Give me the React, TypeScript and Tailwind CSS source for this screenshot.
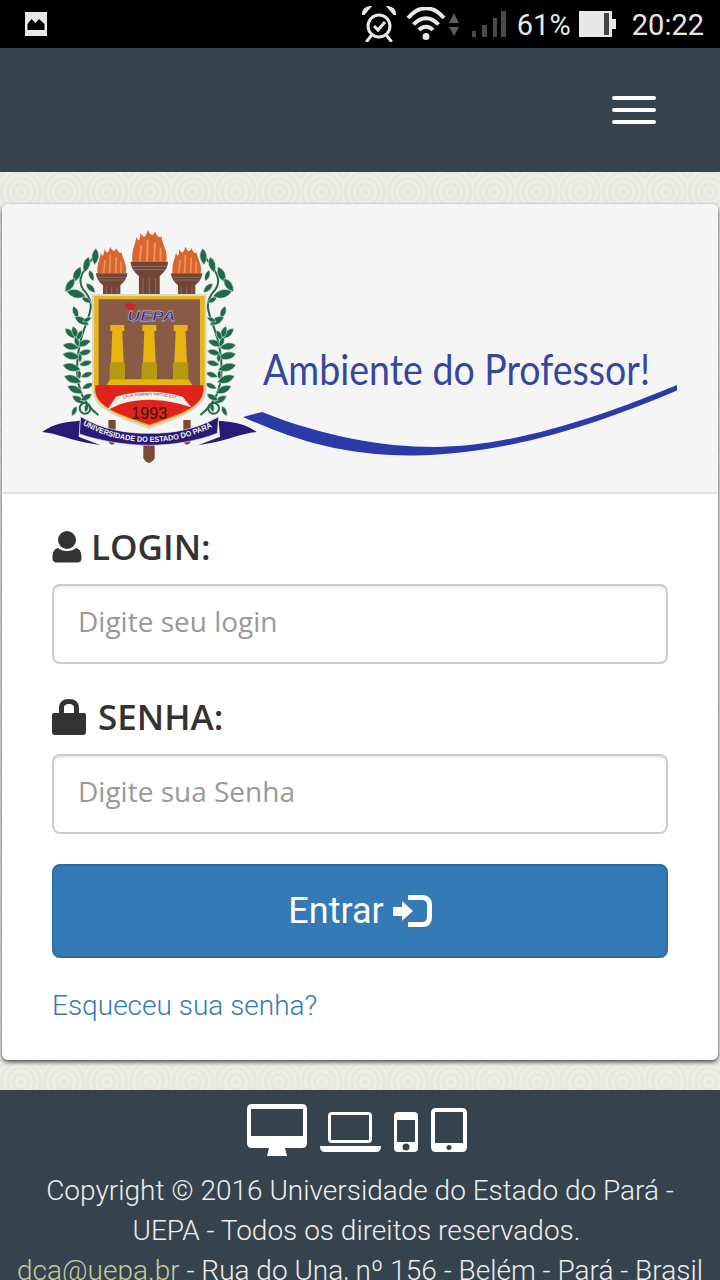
const pattern =
  "bg-[repeating-radial-gradient(circle_at_21px_20px,#e8e8e1_0,#e8e8e1_3px,#eeeee8_3px,#eeeee8_6px),radial-gradient(circle_at_0_0,#eeeee8_0,#e9e9e2_100%)] bg-[length:43px_44.5px]";

// [x, y, angle, length] in emblem coordinates, left half; the right half is mirrored
const leaves: number[][] = [
  [198, 85, 95, 50], [176, 110, 105, 50], [152, 140, 115, 52], [134, 175, 125, 50], [110, 214, 15, 60],
  [178, 150, 70, 36], [168, 190, 45, 40], [155, 232, 30, 34], [130, 258, 70, 40], [134, 290, 30, 50],
  [158, 305, -25, 30], [105, 325, 45, 44], [128, 318, 70, 42], [156, 330, 115, 36], [182, 362, 160, 46],
  [98, 375, 10, 50], [98, 402, 12, 54], [98, 435, 15, 56], [102, 468, 20, 56], [112, 498, 25, 52],
  [126, 528, 30, 44], [184, 392, 165, 42], [186, 425, 165, 40], [188, 458, 160, 38], [190, 490, 155, 38],
  [186, 522, 150, 40], [135, 350, 70, 34], [140, 558, 115, 34], [172, 548, 100, 30], [150, 400, 90, 28],
  [148, 450, 90, 28],
];

function Emblem() {
  return (
    <g transform="translate(28 16) scale(0.3333)">
      {/* torches */}
      <path d="M340 660h34v55q-17 28-34 0zM235 600h22v65q-11 18-22 0zM460 600h22v65q-11 18-22 0z" fill="#7a4a35" />
      {[245, 358, 470].map((cx, i) => {
        const s = i === 1 ? 1.2 : 1;
        return (
          <g key={cx} transform={`translate(${cx} ${i === 1 ? 125 : 160}) scale(${s})`}>
            <path
              d="M-42 0C-46-25-36-40-32-62-28-50-24-48-22-72-16-60-10-56-4-80 2-66 10-62 14-76 20-60 28-58 30-64 32-42 48-28 42 0Z"
              fill="#d9662f"
            />
            <path d="M-24 0L-20-40M-6 0L-4-55M12 0L14-48M28 0L28-35" stroke="#ee935c" strokeWidth="5" />
            <path d="M-47 0H47C46 20 30 32 26 36V85H-26V36C-30 32-46 20-47 0Z" fill="#6f4638" />
            <path d="M-43 12H43M-39 20H39M-16 40V85M0 40V85M16 40V85" stroke="#9c7868" strokeWidth="2" />
          </g>
        );
      })}
      {/* laurel */}
      {[0, 1].map((side) => (
        <g key={side} transform={side ? "translate(716 0) scale(-1 1)" : undefined}>
          <path d="M205 585C130 530 135 440 150 370S205 260 165 215 185 130 200 95" fill="none" stroke="#1f6a48" strokeWidth="6" />
          {leaves.map(([x, y, a, l], i) => (
            <path
              key={i}
              transform={`translate(${x} ${y}) rotate(${a})`}
              d={`M0 0Q${l * 0.45} ${-l * 0.42} ${l} 0Q${l * 0.45} ${l * 0.42} 0 0Z`}
              fill="#1f6a48"
              stroke="#e9efe9"
              strokeWidth="1.500"
            />
          ))}
          <circle cx="165" cy="565" r="16" fill="none" stroke="#1f6a48" strokeWidth="6" />
        </g>
      ))}
      {/* shield */}
      <path d="M186 222H530V505C530 575 430 600 358 628 286 600 186 575 186 505Z" fill="#d8d8d0" />
      <path d="M192 228H524V505C524 570 425 595 358 620 291 595 192 570 192 505Z" fill="#e6b820" />
      <path d="M206 238H510V500H206Z" fill="#8a5a46" />
      <path d="M196 496H520V510C520 565 425 590 358 614 291 590 196 565 196 510Z" fill="#e0231c" />
      {/* columns */}
      {[262, 358, 452].map((x) => (
        <g key={x}>
          <path d={`M${x - 21} 315H${x + 21}V333H${x - 21}Z`} fill="#e6b40f" />
          <path d={`M${x - 15} 333H${x + 15}L${x + 19} 428H${x - 19}Z`} fill="#e6b40f" />
          <path d={`M${x - 23} 428H${x + 23}V478H${x - 23}Z`} fill="#b59a10" />
        </g>
      ))}
      <path d="M240 478H476L487 495H230Z" fill="#e6b40f" />
      <path d="M284 252Q300 244 318 256L306 272Q290 272 284 252Z" fill="#d6202a" />
      <text x="292" y="302" fontFamily="Liberation Sans, sans-serif" fontWeight="700" fontStyle="italic" fontSize="46" fill="#2a2a88" stroke="#fff" strokeWidth="1" textLength="144" lengthAdjust="spacingAndGlyphs">
        UEPA
      </text>
      {/* motto ribbon */}
      <path d="M232 570L258 530Q358 500 458 530L484 562 442 550Q358 528 272 552Z" fill="#f4f0e8" />
      <path id="motto" d="M266 540Q358 512 450 540" fill="none" />
      <text fontFamily="Liberation Sans, sans-serif" fontSize="12" fill="#4a3a30">
        <textPath href="#motto" startOffset="8%">LAUS HOMINIS VIRTUS EST</textPath>
      </text>
      <text x="358" y="597" textAnchor="middle" fontFamily="Liberation Sans, sans-serif" fontSize="52" fill="#3a1412" textLength="108" lengthAdjust="spacingAndGlyphs">
        1993
      </text>
      {/* banner */}
      <path d="M36 636C70 610 110 605 150 602L146 650 212 676 170 668C120 660 80 640 36 636Z" fill="#2a1a78" />
      <path d="M680 636C646 610 606 605 566 602L570 650 504 676 546 668C596 660 636 640 680 636Z" fill="#2a1a78" />
      <path d="M152 590C220 630 290 640 358 640S496 630 566 590L562 640C500 665 420 676 358 676S214 665 148 642Z" fill="#2a1a78" stroke="#e8e8f0" strokeWidth="2" />
      <path id="bannerArc" d="M158 614C225 652 295 666 358 666S492 652 560 614" fill="none" />
      <text fontFamily="Liberation Sans Narrow, Liberation Sans, sans-serif" fontWeight="700" fontSize="23" fill="#f4f4f4">
        <textPath href="#bannerArc" textLength="405" lengthAdjust="spacingAndGlyphs">UNIVERSIDADE DO ESTADO DO PARÁ</textPath>
      </text>
    </g>
  );
}

function Banner() {
  return (
    <svg viewBox="0 0 716 288" className="block w-[716px] h-[288px]">
      <Emblem />
      <text x="261" y="181" fontFamily="Lato, sans-serif" fontSize="42" fill="#34479f" textLength="387" lengthAdjust="spacingAndGlyphs">
        Ambiente do Professor!
      </text>
      <path d="M241 213L260 208C320 232 380 243 432 243 510 243 600 212 675 181V186.500C600 218 510 250 411 251.500 340 252 290 235 241 213Z" fill="#2a3aa8" />
    </svg>
  );
}

function StatusBar() {
  return (
    <div className="h-12 bg-black flex items-center pl-[22px] pr-4 text-[#e6e6e6] font-['Roboto',sans-serif] text-[29px]">
      <svg viewBox="0 0 22 24" className="w-[28px] h-[24px]">
        <path d="M0 0h22v24H0z" fill="#e8e8e8" />
        <path d="M2.500 18v-6l4-5 4 4 3.500-4 5.500 5v6z" fill="#000" />
      </svg>
      <svg width="34" height="36" viewBox="0 0 34 36" className="ml-auto">
        <circle cx="17" cy="20" r="11" fill="none" stroke="#e8e8e8" strokeWidth="3" />
        <path d="M12 20l4 4 7-8" fill="none" stroke="#e8e8e8" strokeWidth="3" />
        <path d="M1 8Q1 2 8 1L2 8ZM33 8Q33 2 26 1L32 8Z" fill="#e8e8e8" stroke="#e8e8e8" strokeWidth="2" />
        <path d="M9 30l-4 5M25 30l4 5" stroke="#e8e8e8" strokeWidth="3" strokeLinecap="round" />
      </svg>
      <svg width="54" height="34" viewBox="0 0 54 34" className="ml-[10px]">
        <path d="M2 11C13-2 27-2 38 11" fill="none" stroke="#e8e8e8" strokeWidth="4" />
        <path d="M7.500 17.500C15 9 25 9 32.500 17.500" fill="none" stroke="#e8e8e8" strokeWidth="4" />
        <path d="M13 23C17 18.500 23 18.500 27 23" fill="none" stroke="#e8e8e8" strokeWidth="4" />
        <circle cx="20" cy="29.500" r="3.500" fill="#e8e8e8" />
        <path d="M48 6l5 10H43zM43 20h10l-5 9z" fill="#5c5c5c" />
      </svg>
      <svg width="34" height="28" viewBox="0 0 34 28" className="ml-[12px]">
        <path d="M0 21h4v6H0zM10 15h5v12h-5zM21 8h4v19h-4zM29 1h5v26h-5z" fill="#4a4a4a" />
      </svg>
      <span className="ml-[11px] w-[52px] mt-[3px]">61%</span>
      <svg width="38" height="26" viewBox="0 0 38 26" className="ml-[10px]">
        <path d="M0 0h25v26H0z" fill="#e8e8e8" />
        <path d="M25 0h8v26h-8z" fill="#e8e8e8" />
        <path d="M25 2h5v22h-5z" fill="#444" />
        <path d="M33 8h4v10h-4z" fill="#e8e8e8" />
      </svg>
      <span className="ml-[15px] mt-[3px]">20:22</span>
    </div>
  );
}

function UserIcon() {
  return (
    <svg width="30" height="32" viewBox="0 0 30 32" className="shrink-0">
      <ellipse cx="15" cy="9" rx="9" ry="9" fill="#333" />
      <path d="M6 17C9 21 21 21 24 17 28 18 29.500 21 29.500 27 29.500 30 28 31.500 25 31.500H5C2 31.500 .5 30 .5 27 .5 21 2 18 6 17Z" fill="#333" />
    </svg>
  );
}

function LockIcon() {
  return (
    <svg width="34" height="36" viewBox="0 0 34 36" className="shrink-0">
      <path d="M2 14H7V9C7 3 11 0 17 0S27 3 27 9V14H32Q34 14 34 16V33Q34 36 31 36H3Q0 36 0 33V16Q0 14 2 14ZM12 14H22V9C22 6 20 5 17 5S12 6 12 9Z" fill="#333" fillRule="evenodd" />
    </svg>
  );
}

function SignInIcon() {
  return (
    <svg width="39" height="32" viewBox="0 0 39 32" className="shrink-0">
      <path d="M1 12H9V7Q9 6 10 7L20 16 10 25Q9 26 9 25V21H1Q0 21 0 20V13Q0 12 1 12Z" fill="#fff" />
      <path d="M16 0H29Q39 0 39 10V22Q39 32 29 32H16Q15 32 15 31V28Q15 27 16 27H29Q34 27 34 22V10Q34 5 29 5H16Q15 5 15 4V1Q15 0 16 0Z" fill="#fff" />
    </svg>
  );
}

function DeviceIcons() {
  return (
    <div className="flex items-end justify-center gap-[13px] h-[52px] pr-[7px]">
      <svg width="60" height="52" viewBox="0 0 60 52">
        <path d="M5 0H55Q60 0 60 5V39Q60 44 55 44H38L40 52H20L22 44H5Q0 44 0 39V5Q0 0 5 0ZM4 5V32H56V5Z" fill="#fff" fillRule="evenodd" />
      </svg>
      <svg width="61" height="40" viewBox="0 0 61 40" className="mb-1">
        <path d="M12 0H48Q52 0 52 4V27Q52 31 48 31H12Q8 31 8 27V4Q8 0 12 0ZM11 3V28H49V3Z" fill="#fff" fillRule="evenodd" />
        <path d="M0 34H61Q61 40 56 40H5Q0 40 0 34Z" fill="#fff" />
      </svg>
      <svg width="24" height="40" viewBox="0 0 24 40" className="mb-1">
        <path d="M4 0H20Q24 0 24 4V36Q24 40 20 40H4Q0 40 0 36V4Q0 0 4 0ZM3 8V30H21V8ZM12 31.500A3.500 3.500 0 1 0 12 38.500 3.500 3.500 0 1 0 12 31.500Z" fill="#fff" fillRule="evenodd" />
      </svg>
      <svg width="36" height="44" viewBox="0 0 36 44" className="mb-1">
        <path d="M5 0H31Q36 0 36 5V39Q36 44 31 44H5Q0 44 0 39V5Q0 0 5 0ZM4 4V35H32V4ZM18 37A2.500 2.500 0 1 0 18 42 2.500 2.500 0 1 0 18 37Z" fill="#fff" fillRule="evenodd" />
      </svg>
    </div>
  );
}

export default function App() {
  return (
    <div className="w-[720px] h-[1280px] overflow-hidden bg-white font-['Open_Sans',sans-serif]">
      <StatusBar />
      <nav className="h-[124px] bg-[#35434f] flex items-center justify-end pr-[64px]">
        <div className="flex flex-col gap-2 w-11 mt-[-1px]">
          <span className="h-1 bg-white rounded-sm" />
          <span className="h-1 bg-white rounded-sm" />
          <span className="h-1 bg-white rounded-sm" />
        </div>
      </nav>
      <main className={`pt-8 pb-[30px] px-[2px] ${pattern}`}>
        <div className="h-[856px] bg-white rounded-md overflow-hidden shadow-[0_2px_4px_rgba(0,0,0,0.7)]">
          <div className="h-[290px] bg-[#f5f5f5] border-b-2 border-[#e2e2e2]">
            <Banner />
          </div>
          <form className="px-[50px] pt-[28px]">
            <label className="flex items-center gap-[9px] h-[50px] text-[35px] font-semibold text-[#333] mb-3">
              <UserIcon />
              LOGIN:
            </label>
            <input
              placeholder="Digite seu login"
              className="block w-full h-20 pl-6 pr-6 pb-[6px] text-[28px] border-2 border-[#ccc] rounded-lg bg-white shadow-[inset_0_2px_2px_rgba(0,0,0,0.075)] placeholder:text-[#999] outline-none"
            />
            <label className="flex items-center gap-[12px] h-[50px] mt-7 text-[35px] font-semibold text-[#333] mb-3">
              <LockIcon />
              SENHA:
            </label>
            <input
              placeholder="Digite sua Senha"
              className="block w-full h-20 pl-6 pr-6 pb-[6px] text-[28px] border-2 border-[#ccc] rounded-lg bg-white shadow-[inset_0_2px_2px_rgba(0,0,0,0.075)] placeholder:text-[#999] outline-none"
            />
            <button
              type="button"
              className="mt-[30px] w-full h-[94px] flex items-center justify-center gap-[9px] rounded-lg bg-[#337ab7] border-2 border-[#2e6da4] text-white text-[36px] font-['Roboto',sans-serif]"
            >
              Entrar
              <SignInIcon />
            </button>
            <a href="#" className="block mt-[30px] text-[28px] leading-9 text-[#337ab7] font-['Roboto',sans-serif] font-light">
              Esqueceu sua senha?
            </a>
          </form>
        </div>
      </main>
      <footer className="bg-[#35434f] pt-[14px] text-center text-[28px] leading-10 text-[#eee] font-['Roboto',sans-serif] font-light">
        <DeviceIcons />
        <p className="mt-[15px] whitespace-nowrap">Copyright © 2016 Universidade do Estado do Pará -</p>
        <p className="whitespace-nowrap pr-[7px]">UEPA - Todos os direitos reservados.</p>
        <p className="whitespace-nowrap">
          <a href="#" className="text-[#c8c8a0]">dca@uepa.br</a> - Rua do Una, nº 156 - Belém - Pará - Brasil
        </p>
      </footer>
    </div>
  );
}
